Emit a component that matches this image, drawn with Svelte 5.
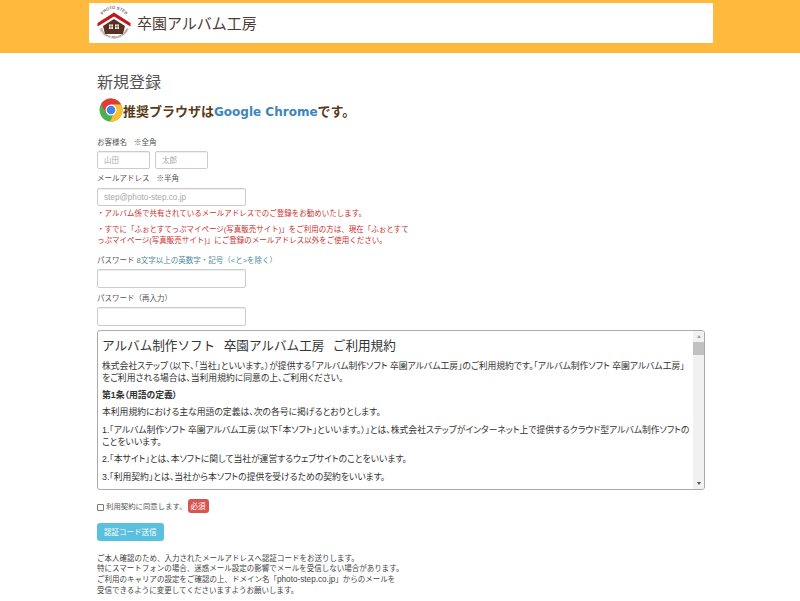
<script>
  let lastName = $state("");
  let firstName = $state("");
  let email = $state("");
  let pw = $state("");
  let pw2 = $state("");
  let agree = $state(false);

  const terms = [
    { cls: "", text: "株式会社ステップ\uFF08以下、「当社」といいます。\uFF09が提供する「アルバム制作ソフト 卒園アルバム工房」のご利用規約です。「アルバム制作ソフト 卒園アルバム工房」をご利用される場合は、当利用規約に同意の上、ご利用ください。" },
    { cls: "head", text: "第1条\uFF08用語の定義\uFF09" },
    { cls: "", text: "本利用規約における主な用語の定義は、次の各号に掲げるとおりとします。" },
    { cls: "", text: "1.「アルバム制作ソフト 卒園アルバム工房\uFF08以下「本ソフト」といいます。\uFF09」とは、株式会社ステップがインターネット上で提供するクラウド型アルバム制作ソフトのことをいいます。" },
    { cls: "", text: "2.「本サイト」とは、本ソフトに関して当社が運営するウェブサイトのことをいいます。" },
    { cls: "", text: "3.「利用契約」とは、当社から本ソフトの提供を受けるための契約をいいます。" }
  ];
</script>

<header class="top">
  <div class="brand">
    <svg class="logo" viewBox="0 0 36 36" width="36" height="36" aria-hidden="true">
      <defs>
        <path id="arcTop" d="M4 18 A14 14 0 0 1 32 18" />
        <path id="arcBottom" d="M2.5 18 A15.5 15.5 0 0 0 33.5 18" />
      </defs>
      <text class="ring" font-size="4.2"><textPath href="#arcTop" startOffset="50%" text-anchor="middle">PHOTO STEP</textPath></text>
      <text class="ring" font-size="3.6"><textPath href="#arcBottom" startOffset="50%" text-anchor="middle">Sotsuen Album Kobo</textPath></text>
      <path d="M1.5 18 L18 7.5 L34.5 18 L34.5 21.5 L18 11.5 L1.5 21.5 Z" fill="#c2171d" />
      <path d="M7 21 L18 14 L29 21 L27 29 L9 29 Z" fill="#5b3022" />
      <rect x="13" y="19.5" width="4" height="4.5" fill="#fff" />
      <rect x="19" y="19.5" width="4" height="4.5" fill="#fff" />
      <path d="M15 19.5v4.5M21 19.5v4.5M13 21.7h4M19 21.7h4" stroke="#5b3022" stroke-width=".6" />
    </svg>
    <span class="brand-name">卒園アルバム工房</span>
  </div>
</header>

<main class="page">
  <h1>新規登録</h1>

  <div class="browser">
    <svg viewBox="0 0 48 48" width="24" height="24" aria-hidden="true">
      <circle cx="24" cy="24" r="23" fill="#4caf50" />
      <path d="M24 1a23 23 0 0 0-19.9 11.5L14 29.7 24 13h20a23 23 0 0 0-20-12z" fill="#e53935" />
      <path d="M44 13H24l10 7-11.6 27A23 23 0 0 0 44 13z" fill="#fbc02d" />
      <circle cx="24" cy="24" r="11" fill="#fff" />
      <circle cx="24" cy="24" r="8.6" fill="#3f85e8" />
    </svg>
    <p>推奨ブラウザは<span class="chrome">Google Chrome</span>です。</p>
  </div>

  <form onsubmit={(e) => e.preventDefault()}>
    <label class="lbl" for="last">お客様名<span class="gap">※全角</span></label>
    <div class="names">
      <input id="last" class="short" placeholder="山田" bind:value={lastName} />
      <input class="short" placeholder="太郎" bind:value={firstName} />
    </div>

    <label class="lbl second" for="mail">メールアドレス<span class="gap">※半角</span></label>
    <input id="mail" class="wide latin" placeholder="step@photo-step.co.jp" bind:value={email} />
    <p class="warn first">・アルバム係で共有されているメールアドレスでのご登録をお勧めいたします。</p>
    <p class="warn">・すでに「ふぉとすてっぷマイページ(写真販売サイト)」をご利用の方は、現在「ふぉとすてっぷマイページ(写真販売サイト)」にご登録のメールアドレス以外をご使用ください。</p>

    <label class="lbl pw" for="pw">パスワード <span class="hint">8文字以上の英数字・記号&#xFF08;&lt;と&gt;を除く&#xFF09;</span></label>
    <input id="pw" class="wide tall" type="password" bind:value={pw} />

    <label class="lbl pw2" for="pw2">パスワード&#xFF08;再入力&#xFF09;</label>
    <input id="pw2" class="wide tall" type="password" bind:value={pw2} />

    <div class="terms">
      <div class="terms-body">
        <h2>アルバム制作ソフト 卒園アルバム工房 ご利用規約</h2>
        {#each terms as t}
          <p class={t.cls}>{t.text}</p>
        {/each}
      </div>
      <div class="bar">
        <span class="arrow up"></span>
        <span class="thumb"></span>
        <span class="arrow down"></span>
      </div>
    </div>

    <div class="agree">
      <input id="agree" type="checkbox" bind:checked={agree} />
      <label for="agree">利用契約に同意します。</label>
      <span class="must">必須</span>
    </div>

    <button type="submit">認証コード送信</button>

    <p class="note">
      ご本人確認のため、入力されたメールアドレスへ認証コードをお送りします。<br />
      特にスマートフォンの場合、迷惑メール設定の影響でメールを受信しない場合があります。<br />
      ご利用のキャリアの設定をご確認の上、ドメイン名「<span class="dom">photo-step.co.jp</span>」からのメールを<br />
      受信できるように変更してくださいますようお願いします。
    </p>
  </form>
</main>

<style>
  :global(body) {
    margin: 0;
    background: #fff;
    color: #555;
    font-family: "Liberation Sans", "Noto Sans CJK JP", sans-serif;
  }

  .top {
    height: 53px;
    box-sizing: border-box;
    padding: 3px 87px 10px 89px;
    background: #ffb93c;
  }
  .brand {
    display: flex;
    align-items: center;
    gap: 5px;
    height: 40px;
    padding-left: 7px;
    border-radius: 1px;
    background: #fff;
  }
  .ring {
    fill: #7b6a60;
    font-family: "Liberation Sans", sans-serif;
    font-weight: 700;
  }
  .brand-name {
    font-size: 15px;
    line-height: 1;
    color: #4d3b35;
  }

  .page {
    padding: 20px 95px 0 97px;
  }
  h1 {
    margin: 0;
    font-size: 16px;
    font-weight: 400;
    line-height: 20px;
    color: #555;
  }

  .browser {
    display: flex;
    align-items: center;
    height: 24px;
    margin: 5px 0 0 2px;
  }
  .browser p {
    margin: 0;
    font-size: 13px;
    font-weight: 700;
    color: #5a3a14;
  }
  .chrome {
    font-family: "DejaVu Sans", sans-serif;
    font-size: 12px;
    color: #3d85bd;
  }

  form {
    margin-top: 15px;
  }
  .lbl {
    display: block;
    font-size: 7.5px;
    line-height: 11px;
    color: #555;
  }
  .gap {
    margin-left: 7px;
  }
  .second {
    margin-top: 4px;
    margin-bottom: 4px;
  }
  .names {
    display: flex;
    gap: 5px;
    margin-top: 3px;
  }
  input:not([type="checkbox"]) {
    display: block;
    box-sizing: border-box;
    height: 18px;
    padding: 0 6px;
    border: 1px solid #ccc;
    border-radius: 2px;
    background: #fff;
    font: 7.5px "Liberation Sans", "Noto Sans CJK JP", sans-serif;
    box-shadow: inset 0 1px 1px rgba(0, 0, 0, 0.07);
  }
  input::placeholder {
    color: #aaa;
  }
  input.latin {
    font-size: 8.2px;
  }
  .short {
    width: 53px;
  }
  .wide {
    width: 149px;
  }
  .tall {
    height: 19px !important;
  }

  .warn {
    margin: 0 0 5px;
    max-width: 316px;
    font-size: 7.5px;
    line-height: 11px;
    color: #c9302c;
  }
  .first {
    margin-top: 1.5px;
  }
  .pw {
    margin-top: 9px;
    margin-bottom: 3px;
  }
  .hint {
    color: #4f8a98;
  }
  .pw2 {
    margin-top: 5px;
    margin-bottom: 3px;
  }

  .terms {
    display: flex;
    height: 160px;
    margin-top: 4px;
    box-sizing: border-box;
    border: 1px solid #aaa;
    border-radius: 3px;
    overflow: hidden;
  }
  .terms-body {
    flex: 1;
    padding: 5px 2px 5px 4px;
    overflow: hidden;
    color: #333;
  }
  .terms-body h2 {
    margin: 0 0 4px;
    font-size: 12.6px;
    font-weight: 400;
    line-height: 20px;
    word-spacing: 5px;
    color: #333;
  }
  .terms-body p {
    margin: 0 0 5px;
    font-size: 8.8px;
    line-height: 12.3px;
    font-feature-settings: "palt";
  }
  .terms-body p.head {
    font-weight: 700;
  }

  .bar {
    display: flex;
    flex-direction: column;
    align-items: center;
    width: 11px;
    background: #f1f1f1;
  }
  .arrow {
    width: 0;
    height: 0;
    margin: 4px 0;
    border-left: 2.5px solid transparent;
    border-right: 2.5px solid transparent;
  }
  .arrow.up {
    border-bottom: 3px solid #a3a3a3;
  }
  .arrow.down {
    margin-top: auto;
    border-top: 3px solid #505050;
  }
  .thumb {
    width: 100%;
    height: 13px;
    background: #c1c1c1;
  }

  .agree {
    display: flex;
    align-items: center;
    height: 15px;
    margin-top: 9px;
    font-size: 7.4px;
    color: #555;
  }
  .agree input {
    appearance: none;
    width: 7px;
    height: 7px;
    margin: 3px 2px 0 0;
    border: 1px solid #777;
    border-radius: 1px;
    background: #fff;
  }
  .agree input:checked {
    background: #0075ff;
  }
  .agree label {
    margin-top: -2px;
  }
  .must {
    margin-left: 1px;
    padding: 2.5px 3px;
    border-radius: 3px;
    background: #d9534f;
    color: #fff;
    font-size: 7.5px;
    line-height: 9px;
  }

  button {
    display: block;
    height: 18px;
    margin-top: 9px;
    padding: 0 7px;
    border: 0;
    border-radius: 3px;
    background: #5bc0de;
    color: #fff;
    font: 7.5px "Liberation Sans", "Noto Sans CJK JP", sans-serif;
  }

  .note {
    margin: 13px 0 0;
    font-size: 7.5px;
    line-height: 10.7px;
    color: #444;
  }
  .dom {
    font-size: 8.2px;
  }
</style>
